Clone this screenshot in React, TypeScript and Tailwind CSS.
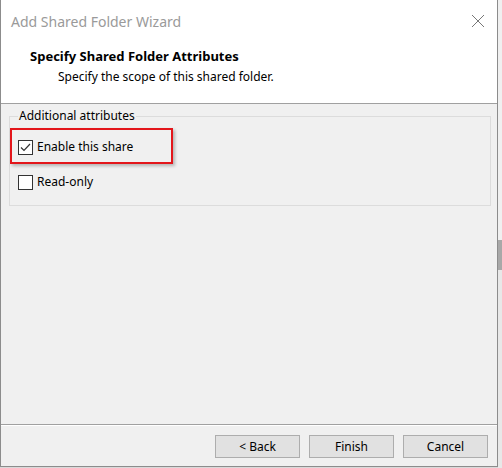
import React from "react";

const font = { fontFamily: '"Noto Sans", "Segoe UI", Arial, sans-serif' };

function CheckBox({ checked }: { checked: boolean }) {
  return (
    <span className="w-[15px] h-[15px] border border-[#333333] bg-white flex items-center justify-center shrink-0">
      {checked && (
        <svg width="13" height="13" viewBox="0 0 13 13">
          <path d="M2 6.5 L5 9.5 L11 3" fill="none" stroke="#333333" strokeWidth="1.2" />
        </svg>
      )}
    </span>
  );
}

export default function App() {
  return (
    <div className="w-[502px] h-[468px] bg-[#d9d9d9] flex" style={font}>
      <div className="w-[498px] h-[467px] border border-[#8c8c8c] border-t-0 flex flex-col bg-[#f0f0f0] shrink-0">
        <div className="h-[104px] bg-white border-b border-[#a0a0a0] flex flex-col">
          <div className="h-[42px] flex items-center justify-between pl-[10px] pr-[12px]">
            <span className="text-[14px] text-[#9a9a9a]">Add Shared Folder Wizard</span>
            <svg width="14" height="14" viewBox="0 0 14 14">
              <path d="M1 1 L13 13 M13 1 L1 13" stroke="#777777" strokeWidth="1" />
            </svg>
          </div>
          <div className="pl-[29px] text-[13px] font-bold text-black leading-[16px] mt-[6px]">
            Specify Shared Folder Attributes
          </div>
          <div className="pl-[57px] text-[12px] text-black leading-[16px] mt-[5px]">
            Specify the scope of this shared folder.
          </div>
        </div>
        <div className="flex-1 px-[8px] pt-[4px]">
          <fieldset className="w-[482px] h-[98px] border border-[#dcdcdc] px-[8px]">
            <legend className="text-[12px] text-black px-[1px] leading-[16px]">
              Additional attributes
            </legend>
            <div className="flex flex-col gap-[17px] mt-[14px]">
              <div className="relative flex items-center gap-[4px] h-[18px]">
                <div className="absolute left-[-8px] top-[-10px] w-[163px] h-[36px] border-2 border-[#e3161b] shadow-[2px_2px_3px_rgba(0,0,0,0.25)]"></div>
                <CheckBox checked />
                <span className="text-[12px] text-black">Enable this share</span>
              </div>
              <div className="flex items-center gap-[4px] h-[18px]">
                <CheckBox checked={false} />
                <span className="text-[12px] text-black">Read-only</span>
              </div>
            </div>
          </fieldset>
        </div>
        <div className="h-[42px] border-t border-[#a0a0a0] shadow-[inset_0_1px_0_#ffffff] flex items-start justify-end gap-[9px] pr-[9px] pt-[10px]">
          {["< Back", "Finish", "Cancel"].map((t) => (
            <button
              key={t}
              className="w-[85px] h-[23px] bg-[#e1e1e1] border border-[#adadad] text-[12px] text-black flex items-center justify-center"
            >
              {t}
            </button>
          ))}
        </div>
      </div>
      <div className="flex-1 flex flex-col">
        <div className="h-[240px] bg-[#f0f0f0]"></div>
        <div className="h-[30px] bg-[#a8a8a8]"></div>
        <div className="flex-1 bg-[#e8e8e8]"></div>
      </div>
    </div>
  );
}
